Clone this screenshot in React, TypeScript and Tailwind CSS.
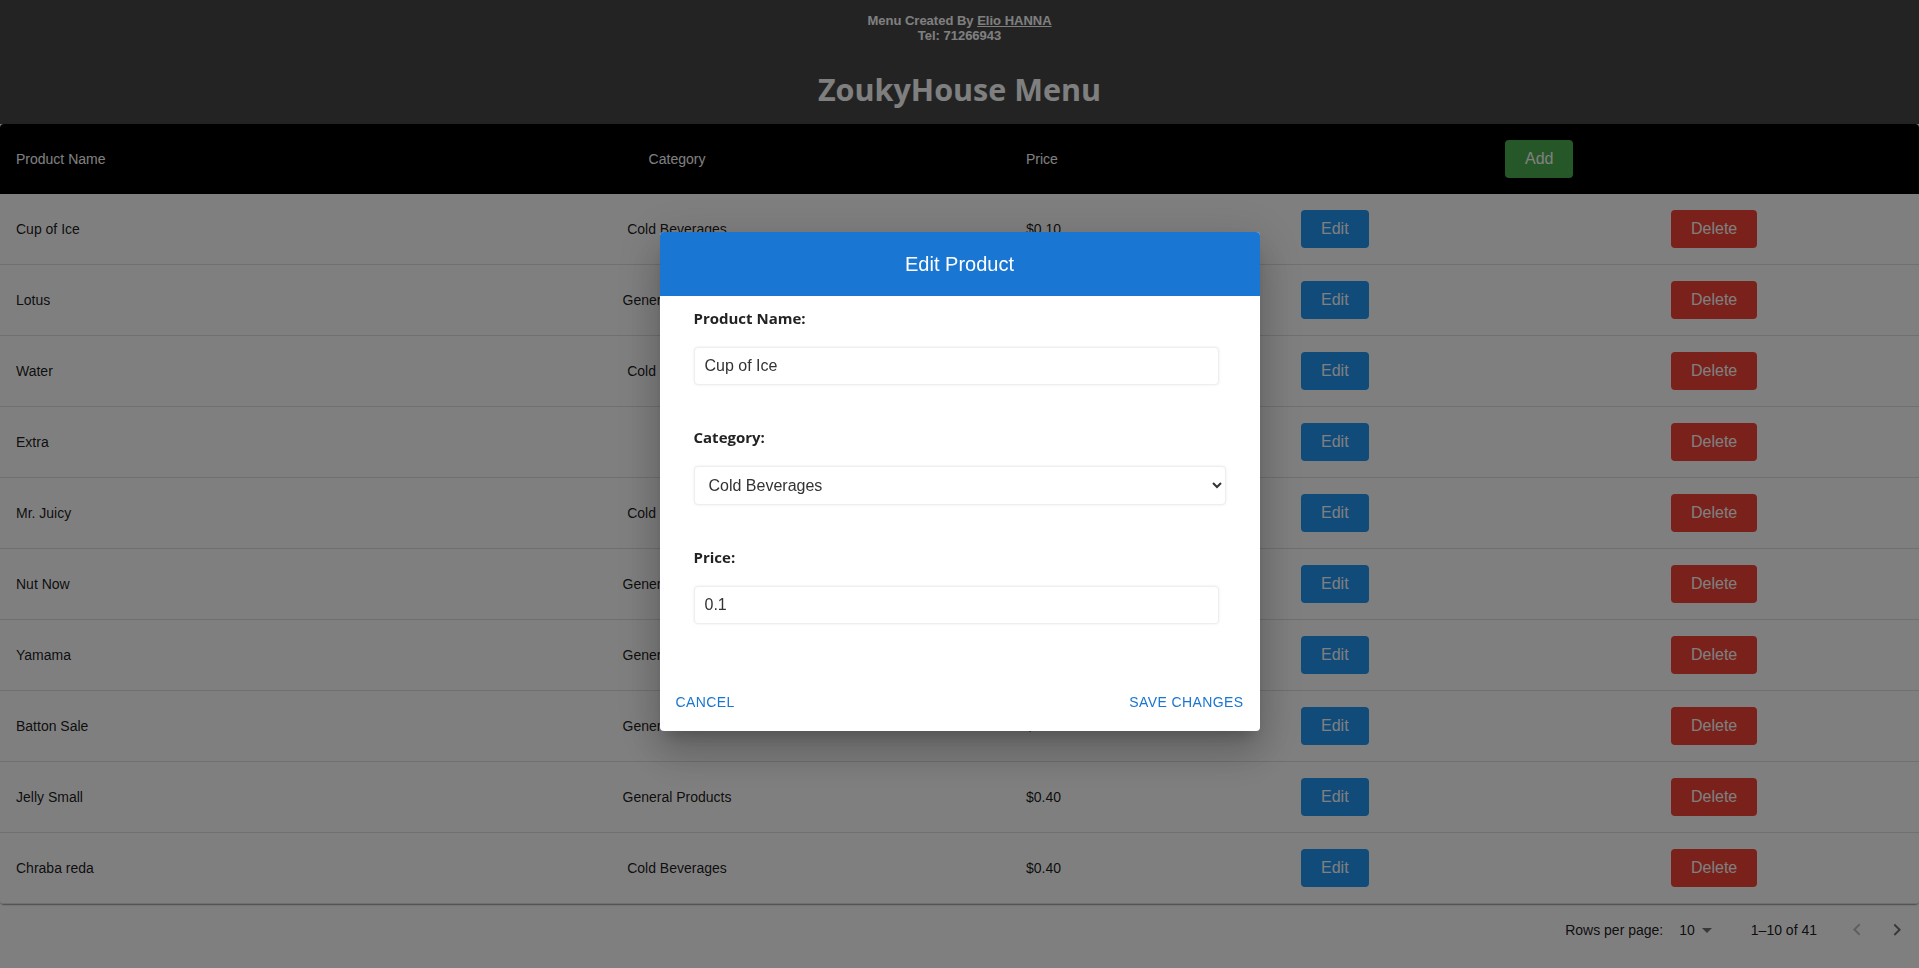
import React, { useState } from 'react';

interface Product {
  id: number;
  name: string;
  category: string;
  price: number;
}

const products: Product[] = [
  { id: 1, name: 'Cup of Ice', category: 'Cold Beverages', price: 0.1 },
  { id: 2, name: 'Lotus', category: 'General Products', price: 0.5 },
  { id: 3, name: 'Water', category: 'Cold Beverages', price: 0.25 },
  { id: 4, name: 'Extra', category: 'Extra', price: 0.2 },
  { id: 5, name: 'Mr. Juicy', category: 'Cold Beverages', price: 0.3 },
  { id: 6, name: 'Nut Now', category: 'General Products', price: 0.5 },
  { id: 7, name: 'Yamama', category: 'General Products', price: 0.4 },
  { id: 8, name: 'Batton Sale', category: 'General Products', price: 0.3 },
  { id: 9, name: 'Jelly Small', category: 'General Products', price: 0.4 },
  { id: 10, name: 'Chraba reda', category: 'Cold Beverages', price: 0.4 },
];

const rowGrid = 'grid grid-cols-[344px_666px_275px_370px_1fr] items-center';

function ChevronLeft() {
  return (
    <svg width="24" height="24" viewBox="0 0 24 24" fill="currentColor">
      <path d="M15.41 16.09l-4.58-4.59 4.58-4.59L14 5.5l-6 6 6 6z" />
    </svg>
  );
}

function ChevronRight() {
  return (
    <svg width="24" height="24" viewBox="0 0 24 24" fill="currentColor">
      <path d="M8.59 16.34l4.58-4.59-4.58-4.59L10 5.75l6 6-6 6z" />
    </svg>
  );
}

function EditDialog() {
  const [name, setName] = useState('Cup of Ice');
  const [category, setCategory] = useState('Cold Beverages');
  const [price, setPrice] = useState('0.1');

  return (
    <div className="fixed inset-0 z-10 flex items-center justify-center bg-black/50">
      <div className="mb-[5px] w-[600px] rounded bg-white shadow-[0_11px_15px_-7px_rgba(0,0,0,0.2),0_24px_38px_3px_rgba(0,0,0,0.14),0_9px_46px_8px_rgba(0,0,0,0.12)] overflow-hidden">
        <div className="h-16 bg-[#1976d2] flex items-center justify-center">
          <h2 className="text-white text-[20px] font-['Liberation_Sans',Arial,sans-serif]">Edit Product</h2>
        </div>

        <div className="pl-[34px] pr-[34px] pt-3 font-['Open_Sans',sans-serif] text-[#222]">
          <label className="block text-[15px] leading-5 font-bold">Product Name:</label>
          <input
            value={name}
            onChange={(e) => setName(e.target.value)}
            className="mt-[19px] block w-[525px] h-[38px] px-[10px] bg-white border border-[#eeeeee] rounded shadow-[0_0_3px_rgba(0,0,0,0.08)] text-base text-[#333] font-['Liberation_Sans',Arial,sans-serif] outline-none"
          />

          <label className="mt-[42px] block text-[15px] leading-5 font-bold">Category:</label>
          <select
            value={category}
            onChange={(e) => setCategory(e.target.value)}
            className="mt-[19px] block w-[532px] h-[39px] px-[10px] bg-white border border-[#eeeeee] rounded shadow-[0_0_3px_rgba(0,0,0,0.08)] text-base text-[#333] font-['Liberation_Sans',Arial,sans-serif] outline-none"
          >
            <option>Cold Beverages</option>
            <option>General Products</option>
            <option>Extra</option>
          </select>

          <label className="mt-[42px] block text-[15px] leading-5 font-bold">Price:</label>
          <input
            value={price}
            onChange={(e) => setPrice(e.target.value)}
            className="mt-[19px] block w-[525px] h-[38px] px-[10px] bg-white border border-[#eeeeee] rounded shadow-[0_0_3px_rgba(0,0,0,0.08)] text-base text-[#333] font-['Liberation_Sans',Arial,sans-serif] outline-none"
          />
        </div>

        <div className="mt-[60px] px-2 pb-[11px] flex justify-between font-['Liberation_Sans',Arial,sans-serif]">
          <button className="h-9 px-2 text-sm font-medium uppercase tracking-[0.02857em] text-[#1976d2] rounded">
            Cancel
          </button>
          <button className="h-9 px-2 text-sm font-medium uppercase tracking-[0.02857em] text-[#1976d2] rounded">
            Save Changes
          </button>
        </div>
      </div>
    </div>
  );
}

export default function App() {
  return (
    <div className="min-h-screen bg-white font-['Liberation_Sans',Arial,sans-serif]">
      <div className="bg-[#464646] text-white text-center pt-[13px] pb-[15px]">
        <p className="text-[13px] leading-[15px] font-bold">
          Menu Created By <a href="#" className="underline">Elio HANNA</a>
        </p>
        <p className="text-[13px] leading-[15px] font-bold">Tel: 71266943</p>
        <h1 className="mt-[26px] text-[30.5px] leading-10 font-bold font-['Open_Sans',sans-serif]">ZoukyHouse Menu</h1>
      </div>

      <div className="rounded overflow-hidden shadow-[0_2px_1px_-1px_rgba(0,0,0,0.2),0_1px_1px_0_rgba(0,0,0,0.14),0_1px_3px_0_rgba(0,0,0,0.12)]">
        <div className={`${rowGrid} h-[70px] bg-black text-white text-sm`}>
          <div className="px-4">Product Name</div>
          <div className="px-4 text-center">Category</div>
          <div className="px-4">Price</div>
          <div className="px-4">
            <button className="ml-[204px] h-[38px] px-5 rounded bg-[#4caf50] text-white text-base">Add</button>
          </div>
          <div />
        </div>

        {products.map((p) => (
          <div key={p.id} className={`${rowGrid} h-[71px] border-b border-[#e0e0e0] text-sm text-black/90`}>
            <div className="px-4">{p.name}</div>
            <div className="px-4 text-center">{p.category}</div>
            <div className="px-4">${p.price.toFixed(2)}</div>
            <div className="px-4">
              <button className="h-[38px] px-5 rounded bg-[#2196f3] text-white text-base">Edit</button>
            </div>
            <div className="px-4">
              <button className="h-[38px] px-5 rounded bg-[#f44336] text-white text-base">Delete</button>
            </div>
          </div>
        ))}
      </div>

      <div className="h-[52px] flex items-center justify-end pr-[2px] text-sm text-black/90">
        <span>Rows per page:</span>
        <div className="ml-2 mr-8 relative flex items-center pl-2 pr-6">
          <span>10</span>
          <svg className="absolute right-0 top-1/2 -translate-y-1/2 text-black/55" width="24" height="24" viewBox="0 0 24 24" fill="currentColor">
            <path d="M7 10l5 5 5-5z" />
          </svg>
        </div>
        <span>1–10 of 41</span>
        <div className="ml-5 flex items-center">
          <button className="w-10 h-10 flex items-center justify-center text-black/25">
            <ChevronLeft />
          </button>
          <button className="w-10 h-10 flex items-center justify-center text-black/55">
            <ChevronRight />
          </button>
        </div>
      </div>

      <EditDialog />
    </div>
  );
}
